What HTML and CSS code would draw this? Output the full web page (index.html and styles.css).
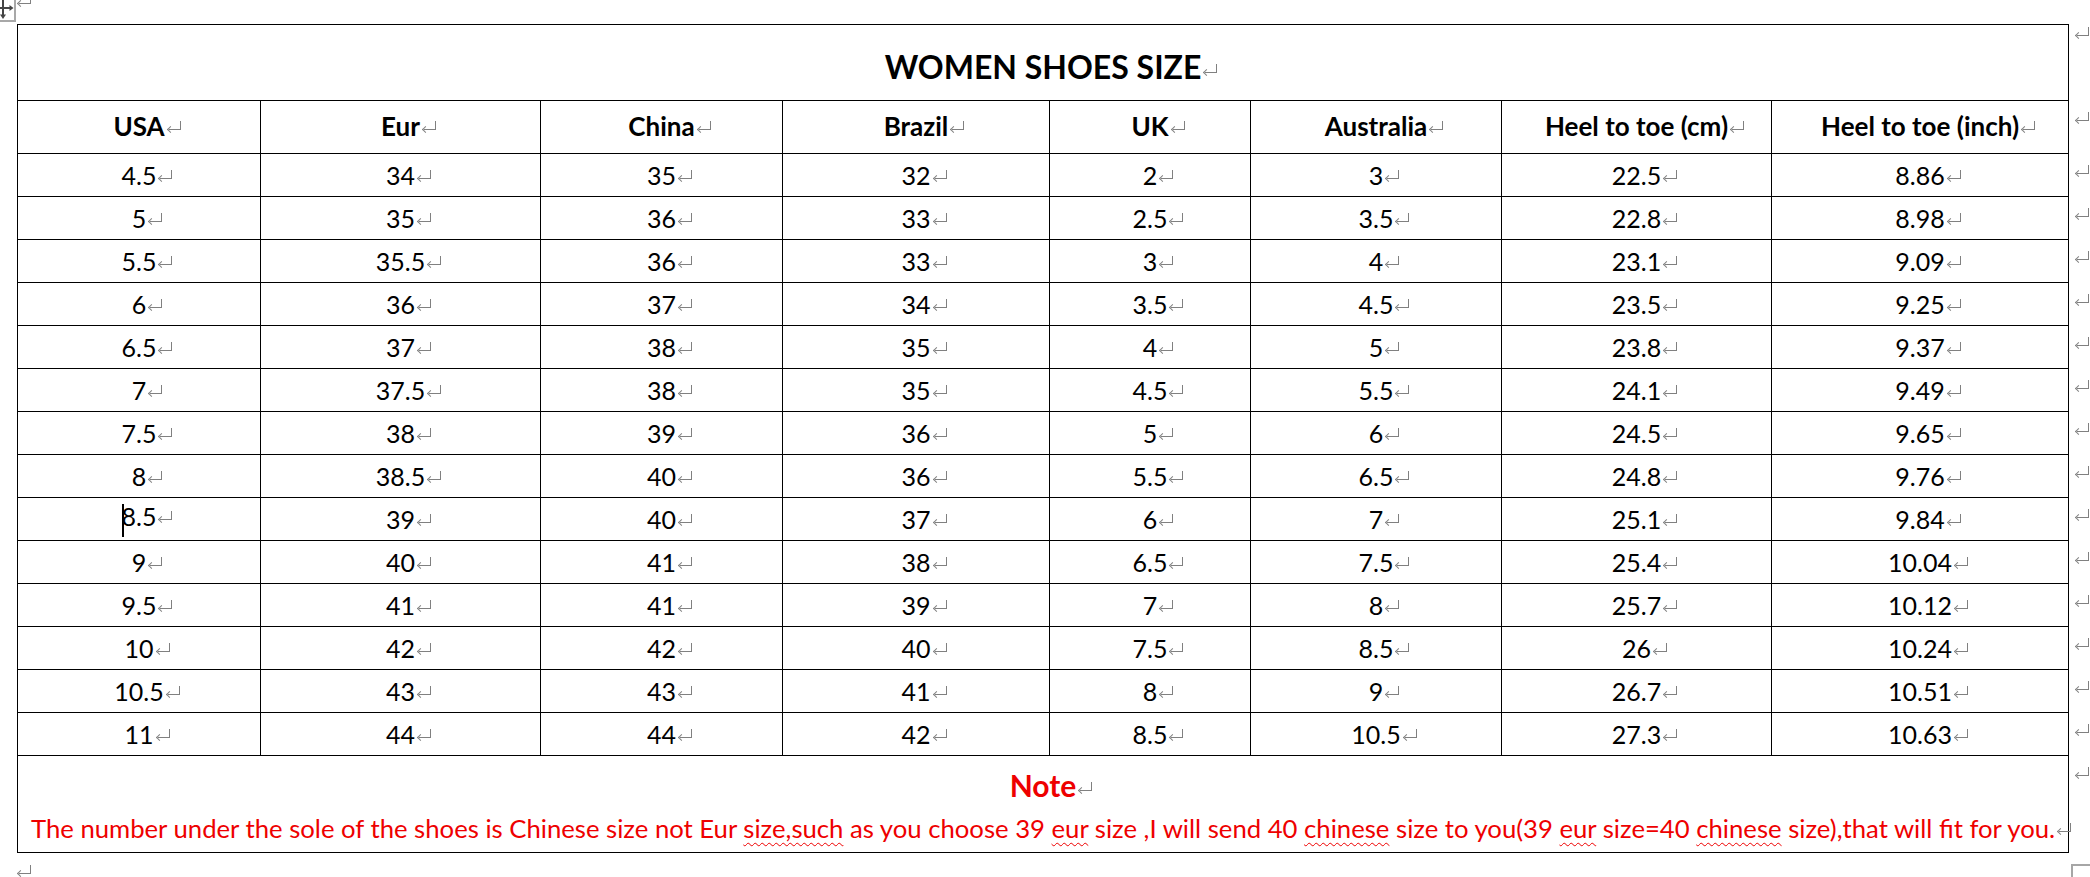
FILE: index.html
```html
<!DOCTYPE html>
<html lang="en">
<head>
<meta charset="utf-8">
<title>Women Shoes Size</title>
<link rel="stylesheet" href="styles.css">
</head>
<body>
<div class="page">
  <svg class="move-handle" width="17" height="23" viewBox="0 0 17 23" aria-hidden="true">
    <path d="M15 0V21H0" fill="none" stroke="#a8a8a8" stroke-width="2"/>
    <path d="M3 -3V15M-3 8H10" fill="none" stroke="#454545" stroke-width="2"/>
    <path d="M0 14.5H6L3 19Z" fill="#454545"/>
    <path d="M9.5 5V11L13.5 8Z" fill="#454545"/>
  </svg>
  <p class="para para-top"><i class="pm"></i></p>
  <table class="size-table">
    <colgroup>
      <col class="c-usa"><col class="c-eur"><col class="c-china"><col class="c-brazil">
      <col class="c-uk"><col class="c-aus"><col class="c-cm"><col class="c-inch"><col class="c-end">
    </colgroup>
    <tbody>
      <tr class="title-row">
        <td class="title" colspan="8">WOMEN SHOES SIZE<i class="pm"></i></td>
        <td class="rowend"><i class="pm"></i></td>
      </tr>
      <tr class="head-row">
        <td>USA<i class="pm"></i></td><td>Eur<i class="pm"></i></td><td>China<i class="pm"></i></td><td>Brazil<i class="pm"></i></td>
        <td>UK<i class="pm"></i></td><td>Australia<i class="pm"></i></td><td>Heel to toe (cm)<i class="pm"></i></td><td>Heel to toe (inch)<i class="pm"></i></td>
        <td class="rowend"><i class="pm"></i></td>
      </tr>
      <tr class="data-row">
        <td>4.5<i class="pm"></i></td><td>34<i class="pm"></i></td><td>35<i class="pm"></i></td><td>32<i class="pm"></i></td>
        <td>2<i class="pm"></i></td><td>3<i class="pm"></i></td><td>22.5<i class="pm"></i></td><td>8.86<i class="pm"></i></td>
        <td class="rowend"><i class="pm"></i></td>
      </tr>
      <tr class="data-row">
        <td>5<i class="pm"></i></td><td>35<i class="pm"></i></td><td>36<i class="pm"></i></td><td>33<i class="pm"></i></td>
        <td>2.5<i class="pm"></i></td><td>3.5<i class="pm"></i></td><td>22.8<i class="pm"></i></td><td>8.98<i class="pm"></i></td>
        <td class="rowend"><i class="pm"></i></td>
      </tr>
      <tr class="data-row">
        <td>5.5<i class="pm"></i></td><td>35.5<i class="pm"></i></td><td>36<i class="pm"></i></td><td>33<i class="pm"></i></td>
        <td>3<i class="pm"></i></td><td>4<i class="pm"></i></td><td>23.1<i class="pm"></i></td><td>9.09<i class="pm"></i></td>
        <td class="rowend"><i class="pm"></i></td>
      </tr>
      <tr class="data-row">
        <td>6<i class="pm"></i></td><td>36<i class="pm"></i></td><td>37<i class="pm"></i></td><td>34<i class="pm"></i></td>
        <td>3.5<i class="pm"></i></td><td>4.5<i class="pm"></i></td><td>23.5<i class="pm"></i></td><td>9.25<i class="pm"></i></td>
        <td class="rowend"><i class="pm"></i></td>
      </tr>
      <tr class="data-row">
        <td>6.5<i class="pm"></i></td><td>37<i class="pm"></i></td><td>38<i class="pm"></i></td><td>35<i class="pm"></i></td>
        <td>4<i class="pm"></i></td><td>5<i class="pm"></i></td><td>23.8<i class="pm"></i></td><td>9.37<i class="pm"></i></td>
        <td class="rowend"><i class="pm"></i></td>
      </tr>
      <tr class="data-row">
        <td>7<i class="pm"></i></td><td>37.5<i class="pm"></i></td><td>38<i class="pm"></i></td><td>35<i class="pm"></i></td>
        <td>4.5<i class="pm"></i></td><td>5.5<i class="pm"></i></td><td>24.1<i class="pm"></i></td><td>9.49<i class="pm"></i></td>
        <td class="rowend"><i class="pm"></i></td>
      </tr>
      <tr class="data-row">
        <td>7.5<i class="pm"></i></td><td>38<i class="pm"></i></td><td>39<i class="pm"></i></td><td>36<i class="pm"></i></td>
        <td>5<i class="pm"></i></td><td>6<i class="pm"></i></td><td>24.5<i class="pm"></i></td><td>9.65<i class="pm"></i></td>
        <td class="rowend"><i class="pm"></i></td>
      </tr>
      <tr class="data-row">
        <td>8<i class="pm"></i></td><td>38.5<i class="pm"></i></td><td>40<i class="pm"></i></td><td>36<i class="pm"></i></td>
        <td>5.5<i class="pm"></i></td><td>6.5<i class="pm"></i></td><td>24.8<i class="pm"></i></td><td>9.76<i class="pm"></i></td>
        <td class="rowend"><i class="pm"></i></td>
      </tr>
      <tr class="data-row">
        <td><span class="caret"></span>8.5<i class="pm"></i></td><td>39<i class="pm"></i></td><td>40<i class="pm"></i></td><td>37<i class="pm"></i></td>
        <td>6<i class="pm"></i></td><td>7<i class="pm"></i></td><td>25.1<i class="pm"></i></td><td>9.84<i class="pm"></i></td>
        <td class="rowend"><i class="pm"></i></td>
      </tr>
      <tr class="data-row">
        <td>9<i class="pm"></i></td><td>40<i class="pm"></i></td><td>41<i class="pm"></i></td><td>38<i class="pm"></i></td>
        <td>6.5<i class="pm"></i></td><td>7.5<i class="pm"></i></td><td>25.4<i class="pm"></i></td><td>10.04<i class="pm"></i></td>
        <td class="rowend"><i class="pm"></i></td>
      </tr>
      <tr class="data-row">
        <td>9.5<i class="pm"></i></td><td>41<i class="pm"></i></td><td>41<i class="pm"></i></td><td>39<i class="pm"></i></td>
        <td>7<i class="pm"></i></td><td>8<i class="pm"></i></td><td>25.7<i class="pm"></i></td><td>10.12<i class="pm"></i></td>
        <td class="rowend"><i class="pm"></i></td>
      </tr>
      <tr class="data-row">
        <td>10<i class="pm"></i></td><td>42<i class="pm"></i></td><td>42<i class="pm"></i></td><td>40<i class="pm"></i></td>
        <td>7.5<i class="pm"></i></td><td>8.5<i class="pm"></i></td><td>26<i class="pm"></i></td><td>10.24<i class="pm"></i></td>
        <td class="rowend"><i class="pm"></i></td>
      </tr>
      <tr class="data-row">
        <td>10.5<i class="pm"></i></td><td>43<i class="pm"></i></td><td>43<i class="pm"></i></td><td>41<i class="pm"></i></td>
        <td>8<i class="pm"></i></td><td>9<i class="pm"></i></td><td>26.7<i class="pm"></i></td><td>10.51<i class="pm"></i></td>
        <td class="rowend"><i class="pm"></i></td>
      </tr>
      <tr class="data-row">
        <td>11<i class="pm"></i></td><td>44<i class="pm"></i></td><td>44<i class="pm"></i></td><td>42<i class="pm"></i></td>
        <td>8.5<i class="pm"></i></td><td>10.5<i class="pm"></i></td><td>27.3<i class="pm"></i></td><td>10.63<i class="pm"></i></td>
        <td class="rowend"><i class="pm"></i></td>
      </tr>
      <tr class="note-row">
        <td class="note" colspan="8">
          <div class="note-title">Note<i class="pm"></i></div>
          <div class="note-body">The number under the sole of the shoes is Chinese size not Eur <span class="sp">size,such</span> as you choose 39 <span class="sp">eur</span> size ,I will send 40 <span class="sp">chinese</span> size to you(39 <span class="sp">eur</span> size=40 <span class="sp">chinese</span> size),that will fit for you.<i class="pm"></i></div>
        </td>
        <td class="rowend"><i class="pm"></i></td>
      </tr>
    </tbody>
  </table>
  <p class="para para-bottom"><i class="pm"></i></p>
  <span class="resize-handle"></span>
</div>
</body>
</html>
```
FILE: styles.css
```css
html, body {
  margin: 0;
  padding: 0;
  background: #fff;
  height: 877px;
  overflow: hidden;
}

body {
  font-family: Lato, "Open Sans", "Liberation Sans", sans-serif;
  color: #000;
}

.page {
  position: relative;
  height: 877px;
  padding-left: 17px;
}

.move-handle {
  position: absolute;
  left: 0;
  top: 0;
}

.resize-handle {
  position: absolute;
  left: 2071px;
  top: 864px;
  width: 20px;
  height: 20px;
  border: 2px solid #a6a6a6;
}

.para {
  margin: 0;
}

.para-top {
  display: flow-root;
  height: 24px;
}

.para-top .pm {
  display: block;
  margin: -5px 0 0 0;
}

.para-bottom {
  display: flow-root;
  padding-top: 12px;
}

.para-bottom .pm {
  display: block;
  margin: 0;
}

/* paragraph mark (return arrow) */
.pm {
  display: inline-block;
  position: relative;
  width: 14px;
  height: 12px;
  margin-left: 2px;
  margin-right: -16px;
  vertical-align: 3px;
}

.pm::before {
  content: "";
  position: absolute;
  right: 0;
  top: 0;
  width: 12px;
  height: 9px;
  box-sizing: border-box;
  border-right: 1px solid #808080;
  border-bottom: 1px solid #808080;
}

.pm::after {
  content: "";
  position: absolute;
  left: 1px;
  top: 6px;
  width: 5px;
  height: 5px;
  box-sizing: border-box;
  border-left: 1px solid #808080;
  border-bottom: 1px solid #808080;
  transform: rotate(45deg);
}

/* table */
.size-table {
  border-collapse: collapse;
  table-layout: fixed;
  width: 2073px;
}

.c-usa { width: 243px; }
.c-eur { width: 280px; }
.c-china { width: 242px; }
.c-brazil { width: 267px; }
.c-uk { width: 201px; }
.c-aus { width: 251px; }
.c-cm { width: 270px; }
.c-inch { width: 297px; }
.c-end { width: 22px; }

.size-table td {
  border: 1px solid #000;
  padding: 0;
  text-align: center;
  vertical-align: middle;
  font-size: 25px;
  line-height: 1.2;
  white-space: nowrap;
}

.size-table td.rowend {
  border: none;
  text-align: left;
  vertical-align: top;
  padding: 11px 0 0 6px;
}

.size-table .title-row td.rowend {
  padding-top: 2px;
}

.rowend .pm {
  display: block;
  margin: 0;
}

.title-row {
  height: 76px;
}

.size-table td.title {
  font-size: 32px;
  font-weight: 700;
  padding-top: 10px;
}

.head-row {
  height: 53px;
}

.size-table .head-row td {
  font-weight: 700;
  font-size: 26px;
}

.data-row {
  height: 43px;
}

.note-row {
  height: 97px;
}

.size-table td.note {
  vertical-align: top;
  padding-top: 8px;
  color: #ee0000;
}

.note-title {
  font-size: 30px;
  font-weight: 700;
  line-height: 43px;
}

.note-body {
  font-size: 25.7px;
  line-height: 43px;
}

.sp {
  text-decoration: underline wavy #ee0000 1px;
  text-underline-offset: 4px;
  text-decoration-skip-ink: none;
}

.caret {
  display: inline-block;
  width: 2px;
  height: 33px;
  background: #000;
  vertical-align: middle;
  margin-right: -2px;
}
```
